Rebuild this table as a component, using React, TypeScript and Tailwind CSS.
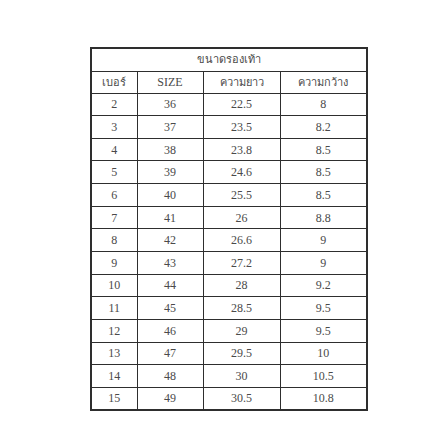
import React from 'react';

const rows: [string, string, string, string][] = [
  ['2', '36', '22.5', '8'],
  ['3', '37', '23.5', '8.2'],
  ['4', '38', '23.8', '8.5'],
  ['5', '39', '24.6', '8.5'],
  ['6', '40', '25.5', '8.5'],
  ['7', '41', '26', '8.8'],
  ['8', '42', '26.6', '9'],
  ['9', '43', '27.2', '9'],
  ['10', '44', '28', '9.2'],
  ['11', '45', '28.5', '9.5'],
  ['12', '46', '29', '9.5'],
  ['13', '47', '29.5', '10'],
  ['14', '48', '30', '10.5'],
  ['15', '49', '30.5', '10.8'],
];

const cell = 'border-[1.5px] border-[#2e2e2e] text-center align-middle p-0';

export default function App() {
  return (
    <div className="w-[447px] h-[447px] bg-white pt-[47px] pl-[90px]" style={{ fontFamily: '"Liberation Serif", "Noto Sans", serif' }}>
      <table className="border-collapse border-2 border-[#2e2e2e] table-fixed w-[276px] text-[12px] text-[#4a4a4a] leading-none">
        <colgroup>
          <col className="w-[46px]" />
          <col className="w-[66px]" />
          <col className="w-[77px]" />
          <col className="w-[87px]" />
        </colgroup>
        <thead>
          <tr className="h-[23px]">
            <th colSpan={4} className={`${cell} font-normal text-[11px]`}>ขนาดรองเท้า</th>
          </tr>
          <tr className="h-[22px]">
            <th className={`${cell} font-normal text-[11px]`}>เบอร์</th>
            <th className={`${cell} font-normal`}>SIZE</th>
            <th className={`${cell} font-normal text-[11px]`}>ความยาว</th>
            <th className={`${cell} font-normal text-[11px]`}>ความกว้าง</th>
          </tr>
        </thead>
        <tbody>
          {rows.map((r) => (
            <tr key={r[0]} className="h-[22.65px]">
              {r.map((v, i) => (
                <td key={i} className={cell}>{v}</td>
              ))}
            </tr>
          ))}
        </tbody>
      </table>
    </div>
  );
}
